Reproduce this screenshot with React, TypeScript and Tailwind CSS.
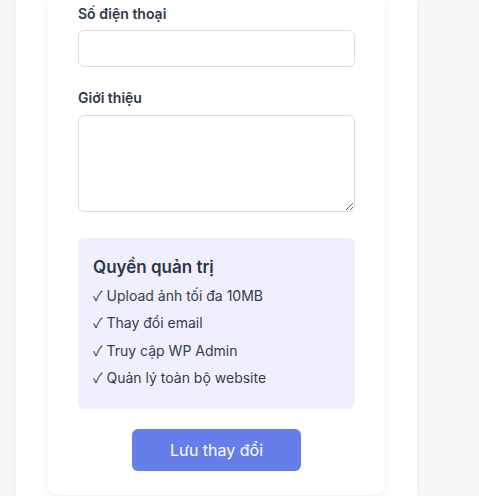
const perks = [
  "Upload ảnh tối đa 10MB",
  "Thay đổi email",
  "Truy cập WP Admin",
  "Quản lý toàn bộ website",
];

const App = () => {
  return (
    <div className="min-h-screen bg-[#f7f8fa] flex font-['Inter','Noto_Sans',sans-serif]">
      <div className="ml-4 w-[401px] min-h-[496px] bg-white px-8 shadow-[0_0_10px_rgba(0,0,0,0.06)]">
        {/* Profile form card */}
        <div className="rounded-b-xl bg-white px-[30px] pt-1 pb-6 shadow-[0_2px_10px_rgba(0,0,0,0.07)]">
          <div className="mb-[21px]">
            <label className="block mb-1.5 text-sm leading-5 font-semibold text-[#2d3748]">
              Số điện thoại
            </label>
            <input
              type="text"
              className="block w-full h-[37px] rounded-md border border-[#dcdcdc] bg-white px-3 text-sm outline-none"
            />
          </div>

          <div className="mb-[26px]">
            <label className="block mb-[7px] text-sm leading-5 font-semibold text-[#2d3748]">
              Giới thiệu
            </label>
            <textarea
              rows={4}
              className="block w-full h-[97px] rounded-md border border-[#dcdcdc] bg-white px-3 py-2 text-sm outline-none"
            />
          </div>

          {/* Admin permissions */}
          <div className="rounded-md bg-[#f0effd] px-[15px] pt-[17px] pb-[18px]">
            <h3 className="mb-[3px] text-[17px] leading-6 font-semibold text-[#2d3748]">
              Quyền quản trị
            </h3>
            <ul className="text-sm text-[#333d4d]">
              {perks.map((p) => (
                <li key={p} className="h-[27.3px] leading-[27.3px]">
                  <span className="font-['Noto_Sans_CJK_JP',sans-serif] leading-none">✓</span> {p}
                </li>
              ))}
            </ul>
          </div>

          <div className="mt-5 flex justify-center">
            <button className="h-[42px] w-[169px] rounded-md bg-[#667eea] text-base text-white">
              Lưu thay đổi
            </button>
          </div>
        </div>
      </div>
    </div>
  );
};

export default App;
